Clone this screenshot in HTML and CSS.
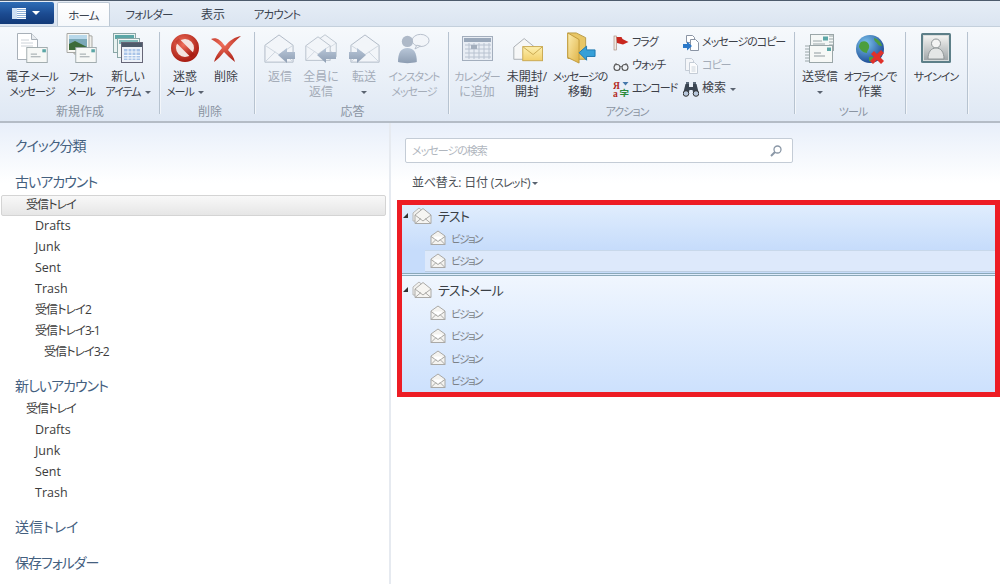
FILE: index.html
```html
<!DOCTYPE html>
<html lang="ja">
<head>
<meta charset="utf-8">
<title>メール</title>
<link rel="stylesheet" href="styles.css">
</head>
<body>
<svg class="defs" width="0" height="0" aria-hidden="true">
<defs>
<linearGradient id="gGrey" x1="0" y1="0" x2="0" y2="1"><stop offset="0" stop-color="#eef2f7"/><stop offset="1" stop-color="#c9d2de"/></linearGradient>
<linearGradient id="gArrow" x1="0" y1="0" x2="0" y2="1"><stop offset="0" stop-color="#b8c6d8"/><stop offset="1" stop-color="#8d9db2"/></linearGradient>
<linearGradient id="gYellow" x1="0" y1="0" x2="0" y2="1"><stop offset="0" stop-color="#fdf0b0"/><stop offset="1" stop-color="#f2cf6a"/></linearGradient>
<linearGradient id="gFolder" x1="0" y1="0" x2="1" y2="1"><stop offset="0" stop-color="#fdeeb0"/><stop offset="1" stop-color="#dfb346"/></linearGradient>
<radialGradient id="gRed" cx=".4" cy=".3" r=".8"><stop offset="0" stop-color="#f0705c"/><stop offset="1" stop-color="#a81c12"/></radialGradient>
<radialGradient id="gGlobe" cx=".35" cy=".3" r=".8"><stop offset="0" stop-color="#7cc4ee"/><stop offset="1" stop-color="#123f8c"/></radialGradient>
<linearGradient id="gUser" x1="0" y1="0" x2="0" y2="1"><stop offset="0" stop-color="#f4f4f2"/><stop offset="1" stop-color="#9fa5a8"/></linearGradient>

<symbol id="env" viewBox="0 0 24 18"><rect x=".5" y=".5" width="23" height="17" fill="#f6f8f6" stroke="#9aa6a8"/><rect x="18" y="2.500" width="4" height="3.500" fill="#5ba6a6"/><path d="M5 8h7M5 11h11" stroke="#8f9a9e" fill="none"/></symbol>
<symbol id="i-mail" viewBox="0 0 32 32"><path d="M1.500 1.500h14l6 6v20h-20z" fill="#fff" stroke="#a8b0b8"/><path d="M15.500 1.500v6h6" fill="#e8ecf0" stroke="#a8b0b8"/><path d="M5 8h8M5 11h12M5 14h12" stroke="#ccd2d8"/><use href="#env" x="10" y="15" width="22" height="16"/></symbol>
<symbol id="i-photo" viewBox="0 0 32 32"><path d="M9 2l18 2v18H9z" fill="#f0f0ec" stroke="#a8a8a4"/><path d="M2 1.500h22v19H2z" fill="#f8f8f4" stroke="#a8a8a4"/><rect x="4" y="3" width="18" height="15" fill="#7ba8b8"/><path d="M4 12l6-3 12 6v3H4z" fill="#3d6b3a"/><path d="M4 3h18v4H4z" fill="#b8d8ea"/><use href="#env" x="10" y="15" width="22" height="16"/></symbol>
<symbol id="i-new" viewBox="0 0 32 32"><rect x="1.500" y="1.500" width="22" height="19" fill="#e8f2f0" stroke="#8aa6a6"/><rect x="3" y="3" width="19" height="4" fill="#5ba6a6"/><rect x="5.500" y="6.500" width="22" height="19" fill="#f2f6f4" stroke="#8aa6a6"/><rect x="7" y="8" width="19" height="4" fill="#7fb8b8"/><rect x="9.500" y="10.500" width="21" height="20" fill="#eef2f8" stroke="#667"/><rect x="10" y="11" width="20" height="4" fill="#4d5a6a"/><path d="M12 17h16v11H12z" fill="#a9c4e8"/><path d="M12 20h16M12 23.500h16M12 26h16M16 17v11M20 17v11M24 17v11" stroke="#f4f8fc" fill="none"/></symbol>
<symbol id="i-no" viewBox="0 0 32 32"><circle cx="16" cy="16" r="11.500" fill="#f4e4e0" stroke="url(#gRed)" stroke-width="5"/><path d="M8 8l16 16" stroke="url(#gRed)" stroke-width="5"/></symbol>
<symbol id="i-x" viewBox="0 0 32 32"><path d="M1 7c5-2 9 0 14 7C20 8 25 5 31 4c-5 4-10 9-13 14 3 3 6 7 7 12-5-4-8-7-11-10-3 4-6 7-10 10 1-5 4-9 8-14C10 13 6 10 1 7z" fill="url(#gRed)"/></symbol>
<symbol id="i-open" viewBox="0 0 32 32"><path d="M1 12L16 1l15 11v18H1z" fill="#f2f5f9" stroke="#aeb8c4"/><path d="M1 12l15 10 15-10M1 30l11-11M31 30L20 19" fill="none" stroke="#ccd4de"/></symbol>
<symbol id="i-reply" viewBox="0 0 32 32"><use href="#i-open" y="2" width="30" height="30"/><path d="M14 23l9-7v4h8v7h-8v4z" fill="url(#gArrow)"/></symbol>
<symbol id="i-replyall" viewBox="0 0 32 32"><use href="#i-open" x="8" y="2" width="24" height="24"/><use href="#i-open" y="4" width="26" height="26"/><path d="M12 23l9-7v4h10v7H21v4z" fill="url(#gArrow)"/></symbol>
<symbol id="i-forward" viewBox="0 0 32 32"><use href="#i-open" x="2" y="2" width="30" height="30"/><path d="M18 23l-9-7v4H1v7h8v4z" fill="url(#gArrow)"/></symbol>
<symbol id="i-im" viewBox="0 0 34 32"><ellipse cx="24" cy="8" rx="9" ry="6.500" fill="#f2f5f9" stroke="#b4bdca"/><path d="M20 13l-2 4 6-3z" fill="#f2f5f9" stroke="#b4bdca"/><circle cx="10" cy="9" r="6" fill="#aeb9c8"/><path d="M0 31c0-10 3-15 10-15s10 5 10 15c-6 1.500-14 1.500-20 0z" fill="url(#gArrow)"/></symbol>
<symbol id="i-cal" viewBox="0 0 32 32"><rect x="1.500" y="4.500" width="30" height="24" fill="#e8edf4" stroke="#a3aebd"/><rect x="3" y="6" width="27" height="4" fill="#9aa8ba"/><path d="M4 13h26M4 17h26M4 21h26M4 25h26M8 11v16M13 11v16M18 11v16M23 11v16M28 11v16" stroke="#b8c2d0" fill="none"/><rect x="10" y="13" width="6" height="4" fill="#a3aebd"/></symbol>
<symbol id="i-unread" viewBox="0 0 34 32"><path d="M3 15L14 6l11 9v13H3z" fill="#f6f7f7" stroke="#a8adb2"/><rect x="12.500" y="14.500" width="21" height="15" fill="url(#gYellow)" stroke="#c8a850"/><path d="M13 15l10.500 8L33 15" fill="none" stroke="#c8a850"/></symbol>
<symbol id="i-move" viewBox="0 0 34 34"><path d="M4 1h9l10 5v23H14l-10-1z" fill="#e8c665" stroke="#b89a44"/><path d="M4 1l12 7v25L4 27z" fill="url(#gFolder)" stroke="#c09a3a"/><path d="M16 22l8-7v4h9v7h-9v4z" fill="#36a0d8" stroke="#1d78b0"/></symbol>
<symbol id="i-flag" viewBox="0 0 16 16"><rect x="1" y="1" width="2.500" height="14" fill="#f0e8e0" stroke="#a08070" stroke-width=".6"/><path d="M3.500 2h5l1 2 6 3-5.500 2.500L4 8z" fill="#c8271e"/></symbol>
<symbol id="i-watch" viewBox="0 0 16 16"><circle cx="4" cy="9.500" r="3" fill="#eef2f6" stroke="#555" stroke-width="1.100"/><circle cx="12" cy="9.500" r="3" fill="#eef2f6" stroke="#555" stroke-width="1.100"/><path d="M7 9c.7-.8 1.300-.8 2 0M1.500 7l2-2M14.500 7l-2-2" stroke="#555" fill="none"/></symbol>
<symbol id="i-encode" viewBox="0 0 16 16"><text x="0" y="8" class="enc enc-r">Я</text><path d="M9.500 1h6l-3 3.500z" fill="#4477aa"/><text x="0" y="15.500" class="enc enc-r">a</text><text x="6.500" y="15.500" class="enc enc-g">字</text></symbol>
<symbol id="i-copymsg" viewBox="0 0 16 16"><path d="M3.500.5h6l2 2v5h-8z" fill="#fff" stroke="#8a94a4"/><path d="M7.500 4.500h5l3 3v8h-8z" fill="#fff" stroke="#8a94a4"/><path d="M0 9h4V6.500L9 11l-5 4.500V13H0z" fill="#2a78c8"/></symbol>
<symbol id="i-copy" viewBox="0 0 16 16"><path d="M2.500.5h6l2 2v10h-8z" fill="#f4f6f9" stroke="#c4ccd6"/><path d="M6.500 4.500h5l3 3v8h-8z" fill="#fbfcfd" stroke="#c4ccd6"/><path d="M8.500 9h4M8.500 11h4M8.500 13h4" stroke="#ccd4dc"/></symbol>
<symbol id="i-find" viewBox="0 0 16 16"><path d="M2.500 3h3.500v3h4V3h3.500l2.500 10h-5.500L9.500 9h-3L5.500 13H0z" fill="#3a4552"/><rect x="3" y="1" width="3" height="2" fill="#5a6878"/><rect x="10" y="1" width="3" height="2" fill="#5a6878"/><circle cx="3" cy="12.500" r="2.800" fill="#b8c8dc" stroke="#333"/><circle cx="13" cy="12.500" r="2.800" fill="#b8c8dc" stroke="#333"/></symbol>
<symbol id="i-sr" viewBox="0 0 32 32"><rect x="6.500" y="2.500" width="23" height="16" fill="#f4f7f6" stroke="#9aa6a8"/><rect x="19" y="4.500" width="5" height="4" fill="#5ba6a6"/><path d="M25 4h5M25 7h5M25 10h5M25 13h5M25 16h5M9 9h9M9 12h12" stroke="#9aa6a8"/><path d="M1 14h4M1 17h4M1 20h4M1 23h4M1 26h4M1 29h4" stroke="#9aa6a8"/><use href="#env" x="5" y="13" width="24" height="18"/></symbol>
<symbol id="i-globe" viewBox="0 0 32 32"><circle cx="16" cy="17" r="14" fill="url(#gGlobe)"/><path d="M7 10c4-2 7 0 8 3 1 4-2 5-2 8-3 0-7-3-8-6 0-2 1-4 2-5zM20 6c4 1 7 4 8 8-3 0-4-1-5-3-2-1-3-3-3-5zM15 25c3-1 5 0 6 3-2 2-4 2-6 1z" fill="#4c9e3c"/><path d="M18 19l3 3 4-4 3 3-4 4 4 4-3 3-4-4-4 4-3-3 4-4-3-3z" fill="#e0312a" transform="translate(2 0)"/></symbol>
<symbol id="i-user" viewBox="0 0 32 32"><rect x="1" y="1" width="30" height="30" rx="1.500" fill="#5d7f88"/><rect x="3.500" y="3.500" width="25" height="25" fill="url(#gUser)" stroke="#d8dcdc"/><circle cx="16" cy="11.500" r="4.500" fill="#f4f4f4" stroke="#909698"/><path d="M8 27c0-7 3-11 8-11s8 4 8 11z" fill="#e4e6e6" stroke="#909698"/></symbol>
<symbol id="i-msg" viewBox="0 0 16 16"><path d="M1 6l7-5 7 5v8.500H1z" fill="#f4f3f0" stroke="#aaa9a6"/><path d="M4 6.500h8v4H4z" fill="#fff"/><path d="M1 6.500l7 5 7-5M1 14.500l5-5M15 14.500l-5-5" fill="none" stroke="#aaa9a6"/></symbol>
<symbol id="i-thread" viewBox="0 0 20 18"><path d="M1 7l6-5 6 5v8H1z" fill="#f2f1ee" stroke="#b8b8b6"/><path d="M3 9l8-6.500L19 9v8.500H3z" fill="#f6f5f2" stroke="#aaa9a6"/><path d="M3 9l8 6 8-6M3 17.500l6-5M19 17.500l-6-5" fill="none" stroke="#aaa9a6"/></symbol>
<symbol id="i-search" viewBox="0 0 12 12"><circle cx="7.500" cy="4.500" r="3.500" fill="none" stroke="#8a97a6" stroke-width="1.300"/><path d="M5 7l-4 4" stroke="#8a97a6" stroke-width="2"/></symbol>
</defs>
</svg>

<header class="tabbar">
  <button class="file-btn" type="button"><span class="file-glyph"></span><span class="caret caret-white"></span></button>
  <span class="tab tab-active k">ホーム</span>
  <span class="tab tab-folder k">フォルダー</span>
  <span class="tab tab-view">表示</span>
  <span class="tab tab-account k">アカウント</span>
</header>

<section class="ribbon">
  <div class="group g1">
    <div class="cmds">
      <div class="big w52"><svg class="ico"><use href="#i-mail"/></svg><span>電子<span class="k">メール</span><br><span class="k">メッセージ</span></span></div>
      <div class="big w46"><svg class="ico"><use href="#i-photo"/></svg><span><span class="k">フォト<br>メール</span></span></div>
      <div class="big w48"><svg class="ico"><use href="#i-new"/></svg><span>新しい<br><span class="k">アイテム</span> <i class="caret"></i></span></div>
    </div>
    <div class="label">新規作成</div>
  </div>
  <div class="group g2">
    <div class="cmds">
      <div class="big w40"><svg class="ico"><use href="#i-no"/></svg><span>迷惑<br><span class="k">メール</span> <i class="caret"></i></span></div>
      <div class="big w42"><svg class="ico"><use href="#i-x"/></svg><span>削除</span></div>
    </div>
    <div class="label">削除</div>
  </div>
  <div class="group g3">
    <div class="cmds off">
      <div class="big w40"><svg class="ico"><use href="#i-reply"/></svg><span>返信</span></div>
      <div class="big w42"><svg class="ico"><use href="#i-replyall"/></svg><span>全員に<br>返信</span></div>
      <div class="big w44"><svg class="ico"><use href="#i-forward"/></svg><span>転送<br><i class="caret"></i></span></div>
      <div class="big w56"><svg class="ico"><use href="#i-im"/></svg><span><span class="k">インスタント<br>メッセージ</span></span></div>
    </div>
    <div class="label">応答</div>
  </div>
  <div class="group g4">
    <div class="cmds">
      <div class="big w48 off"><svg class="ico"><use href="#i-cal"/></svg><span><span class="k">カレンダー</span><br>に追加</span></div>
      <div class="big w52"><svg class="ico"><use href="#i-unread"/></svg><span>未開封/<br>開封</span></div>
      <div class="big w54"><svg class="ico"><use href="#i-move"/></svg><span><span class="k">メッセージの</span><br>移動</span></div>
      <div class="small-col sc1">
        <div class="small"><svg class="sico"><use href="#i-flag"/></svg><span class="k">フラグ</span></div>
        <div class="small"><svg class="sico"><use href="#i-watch"/></svg><span class="k">ウォッチ</span></div>
        <div class="small"><svg class="sico"><use href="#i-encode"/></svg><span class="k">エンコード</span></div>
      </div>
      <div class="small-col sc2">
        <div class="small"><svg class="sico"><use href="#i-copymsg"/></svg><span class="k">メッセージのコピー</span></div>
        <div class="small off"><svg class="sico"><use href="#i-copy"/></svg><span class="k">コピー</span></div>
        <div class="small"><svg class="sico"><use href="#i-find"/></svg><span>検索 <i class="caret"></i></span></div>
      </div>
    </div>
    <div class="label"><span class="k">アクション</span></div>
  </div>
  <div class="group g5">
    <div class="cmds">
      <div class="big w40"><svg class="ico"><use href="#i-sr"/></svg><span>送受信<br><i class="caret"></i></span></div>
      <div class="big w60"><svg class="ico"><use href="#i-globe"/></svg><span><span class="k">オフラインで</span><br>作業</span></div>
    </div>
    <div class="label"><span class="k">ツール</span></div>
  </div>
  <div class="group g6">
    <div class="cmds">
      <div class="big w52"><svg class="ico"><use href="#i-user"/></svg><span><span class="k">サインイン</span></span></div>
    </div>
  </div>
</section>

<main class="workspace">
  <nav class="sidebar">
    <h2 class="head">クイック分類</h2>
    <h2 class="head head-gap head-acct">古いアカウント</h2>
    <div class="folder lv1 selected jp">受信トレイ</div>
    <div class="folder lv2">Drafts</div>
    <div class="folder lv2">Junk</div>
    <div class="folder lv2">Sent</div>
    <div class="folder lv2">Trash</div>
    <div class="folder lv2 jp">受信トレイ2</div>
    <div class="folder lv2 jp">受信トレイ3-1</div>
    <div class="folder lv3 jp">受信トレイ3-2</div>
    <h2 class="head head-new head-acct">新しいアカウント</h2>
    <div class="folder lv1 jp">受信トレイ</div>
    <div class="folder lv2">Drafts</div>
    <div class="folder lv2">Junk</div>
    <div class="folder lv2">Sent</div>
    <div class="folder lv2">Trash</div>
    <h2 class="head head-out">送信トレイ</h2>
    <h2 class="head head-save">保存フォルダー</h2>
  </nav>
  <section class="pane">
    <div class="search"><span class="k">メッセージの検索</span><svg class="search-ico"><use href="#i-search"/></svg></div>
    <div class="sort">並べ替え: 日付 (<span class="k">スレッド</span>)<i class="caret"></i></div>
    <div class="list">
      <div class="thread t1">
        <div class="thead"><i class="tri"></i><svg class="tico"><use href="#i-thread"/></svg>テスト</div>
        <div class="msg"><svg class="mico"><use href="#i-msg"/></svg>ビジョン</div>
        <div class="msg msg-sel"><svg class="mico"><use href="#i-msg"/></svg>ビジョン</div>
      </div>
      <div class="thread t2">
        <div class="thead"><i class="tri"></i><svg class="tico"><use href="#i-thread"/></svg>テストメール</div>
        <div class="msg"><svg class="mico"><use href="#i-msg"/></svg>ビジョン</div>
        <div class="msg"><svg class="mico"><use href="#i-msg"/></svg>ビジョン</div>
        <div class="msg"><svg class="mico"><use href="#i-msg"/></svg>ビジョン</div>
        <div class="msg"><svg class="mico"><use href="#i-msg"/></svg>ビジョン</div>
      </div>
    </div>
  </section>
</main>
</body>
</html>
```
FILE: styles.css
```css
* { box-sizing: border-box; }
html, body { margin: 0; padding: 0; }
body {
  width: 1000px; height: 584px; overflow: hidden; background: #fff;
  font-family: "Open Sans", "Noto Sans CJK JP", sans-serif;
  font-feature-settings: "palt"; color: #3c3c3c;
}
.defs { position: absolute; }
.k { font-size: 11px; letter-spacing: -1px; }
.enc { font-size: 9.500px; font-weight: 700; font-family: "Liberation Serif", "Noto Sans CJK JP", serif; }
.enc-r { fill: #b3281e; }
.enc-g { fill: #2a8a3a; font-family: "Noto Sans CJK JP", sans-serif; }

.tabbar {
  height: 26px; display: flex; align-items: flex-end;
  border-top: 1px solid #4d5b6c;
  background: linear-gradient(#e6edf6, #dbe5f1);
  font-size: 12px; color: #3a4350;
}
.file-btn {
  width: 54px; height: 22px; margin: 0 3px 2px 0; padding: 0 0 0 12px; border: 0;
  border-radius: 0 2px 2px 0; display: flex; align-items: center; gap: 5px;
  background: linear-gradient(#2e6db6, #1b4a90 55%, #123a78);
}
.file-glyph { width: 14px; height: 11px; background: repeating-linear-gradient(#fff 0 1px, #8fb0d8 1px 2px); border-left: 5px solid #cfe0f4; }
.tab { height: 24px; display: flex; align-items: center; justify-content: center; }
.tab.k { font-size: 11.500px; letter-spacing: -.8px; }
.tab-active { width: 53px; background: linear-gradient(#fff, #f5f8fb); border: 1px solid #bcc8d4; border-bottom: 0; border-radius: 2px 2px 0 0; }
.tab-folder { width: 78px; }
.tab-view { width: 50px; }
.tab-account { width: 78px; }

.ribbon {
  height: 97px; display: flex;
  background: linear-gradient(#f6f9fc, #dfe8f4);
  border-top: 1px solid #c4d0dc; border-bottom: 2px solid #b4bcc6;
  font-size: 12px; line-height: 14.500px; color: #3c4048;
}
.group { display: flex; flex-direction: column; position: relative; }
.group::after { content: ""; position: absolute; right: 0; top: 5px; bottom: 7px; width: 1px; background: #b7c3d0; box-shadow: 1px 0 0 #f3f6fa; }
.g1 { width: 160px; padding-left: 6px; }
.g2 { width: 95px; padding-left: 5px; }
.g3 { width: 194px; padding-left: 5px; }
.g4 { width: 346px; padding-left: 4px; }
.g5 { width: 111px; padding-left: 5px; }
.g6 { width: 62px; padding-left: 4px; }
.cmds { display: flex; height: 76px; }
.big { display: flex; flex-direction: column; align-items: center; text-align: center; white-space: nowrap; }
.ico { width: 32px; height: 32px; margin: 5px 0 6px; flex: none; }
.w40 { width: 40px; } .w42 { width: 42px; } .w44 { width: 44px; } .w46 { width: 46px; }
.w48 { width: 48px; } .w52 { width: 52px; } .w54 { width: 54px; } .w56 { width: 56px; } .w60 { width: 60px; }
.off, .off span { color: #a4acb8; }
.label { text-align: center; color: #8a94a2; line-height: 15px; margin-top: 1px; }
.g1 .label { padding-right: 6px; }
.g3 .label { padding-right: 4px; }
.g4 .label { padding-left: 6px; }
.caret { display: inline-block; width: 0; height: 0; vertical-align: middle; border: 3px solid transparent; border-top: 3px solid #5a6370; border-bottom: 0; margin-left: 1px; }
.caret-white { border-top-color: #fff; border-width: 4px 4px 0; }
.small-col { display: flex; flex-direction: column; padding-top: 4px; }
.sc1 { width: 70px; margin-left: 6px; }
.sc2 { width: 105px; }
.small { display: flex; align-items: center; height: 23px; white-space: nowrap; gap: 3px; }
.sico { width: 16px; height: 16px; flex: none; }

.workspace { height: 461px; display: flex; background: linear-gradient(#e8effa, #fff 60px); }
.sidebar { width: 391px; flex: none; border-right: 2px solid #e6eaf0; padding-top: 13px; }
.head { margin: 0; font-size: 14px; font-weight: 400; line-height: 20px; color: #44607f; padding-left: 15px; letter-spacing: -1px; }
.head-gap { margin-top: 16px; }
.head-acct { margin-bottom: 3px; }
.head-new { margin-top: 13px; }
.head-out { margin-top: 13px; letter-spacing: 0; }
.head-save { margin-top: 16px; }
.folder { height: 21px; line-height: 20px; font-size: 12.500px; color: #3c3c3c; }
.jp { font-size: 12px; letter-spacing: -.9px; }
.lv1 { padding-left: 26px; }
.lv2 { padding-left: 35px; }
.lv3 { padding-left: 44px; }
.selected { width: 385px; margin-left: 1px; padding-left: 24px; border: 1px solid #d4d4d4; border-radius: 2px; background: linear-gradient(#f8f8f8, #e6e6e6); line-height: 18px; }

.pane { flex: 1; padding: 15px 0 0 6px; min-width: 0; }
.search {
  width: 388px; height: 25px; margin-left: 8px; display: flex; align-items: center; justify-content: space-between;
  padding: 0 10px 0 6px; background: #fff; border: 1px solid #c4ccd6; border-radius: 2px;
  color: #b0b6be; line-height: 20px;
}
.search-ico { width: 12px; height: 12px; }
.sort { margin: 10px 0 0 15px; height: 20px; font-size: 12px; line-height: 20px; color: #4a4f56; letter-spacing: -.2px; }
.sort .caret { margin-left: 2px; }
.list { width: 603px; height: 197px; margin-top: 7px; border: 5px solid #ed1c24; display: flex; flex-direction: column; }
.thread { display: flex; flex-direction: column; }
.t1 { height: 72px; background: linear-gradient(#e0edfd, #c6dcfb 66%, #c6dcfb); border-bottom: 3px double #8aa8b8; }
.t2 { flex: 1; padding-top: 2px; background: linear-gradient(#f0f6fe, #cde1fd); }
.t2 .thead { margin-bottom: 2px; }
.thead { height: 22px; display: flex; align-items: center; font-size: 13px; letter-spacing: -.8px; color: #3a3f46; }
.t1 .thead { padding-bottom: 2px; }
.t1 .msg:first-of-type { height: 23px; }
.tri { width: 0; height: 0; margin: 0 4px 0 1px; border-style: solid; border-width: 0 0 5px 5px; border-color: transparent transparent #333 transparent; }
.tico { width: 20px; height: 18px; margin-right: 6px; }
.msg { height: 22.500px; display: flex; align-items: center; padding-left: 28px; font-size: 10.500px; letter-spacing: -1.500px; color: #7a7f86; }
.msg-sel { margin-left: 23px; padding-left: 5px; background: #dde9fb; border-top: 1px solid #c8d8ea; border-bottom: 1px solid #bccde0; }
.mico { width: 16px; height: 16px; margin-right: 5px; }
```
